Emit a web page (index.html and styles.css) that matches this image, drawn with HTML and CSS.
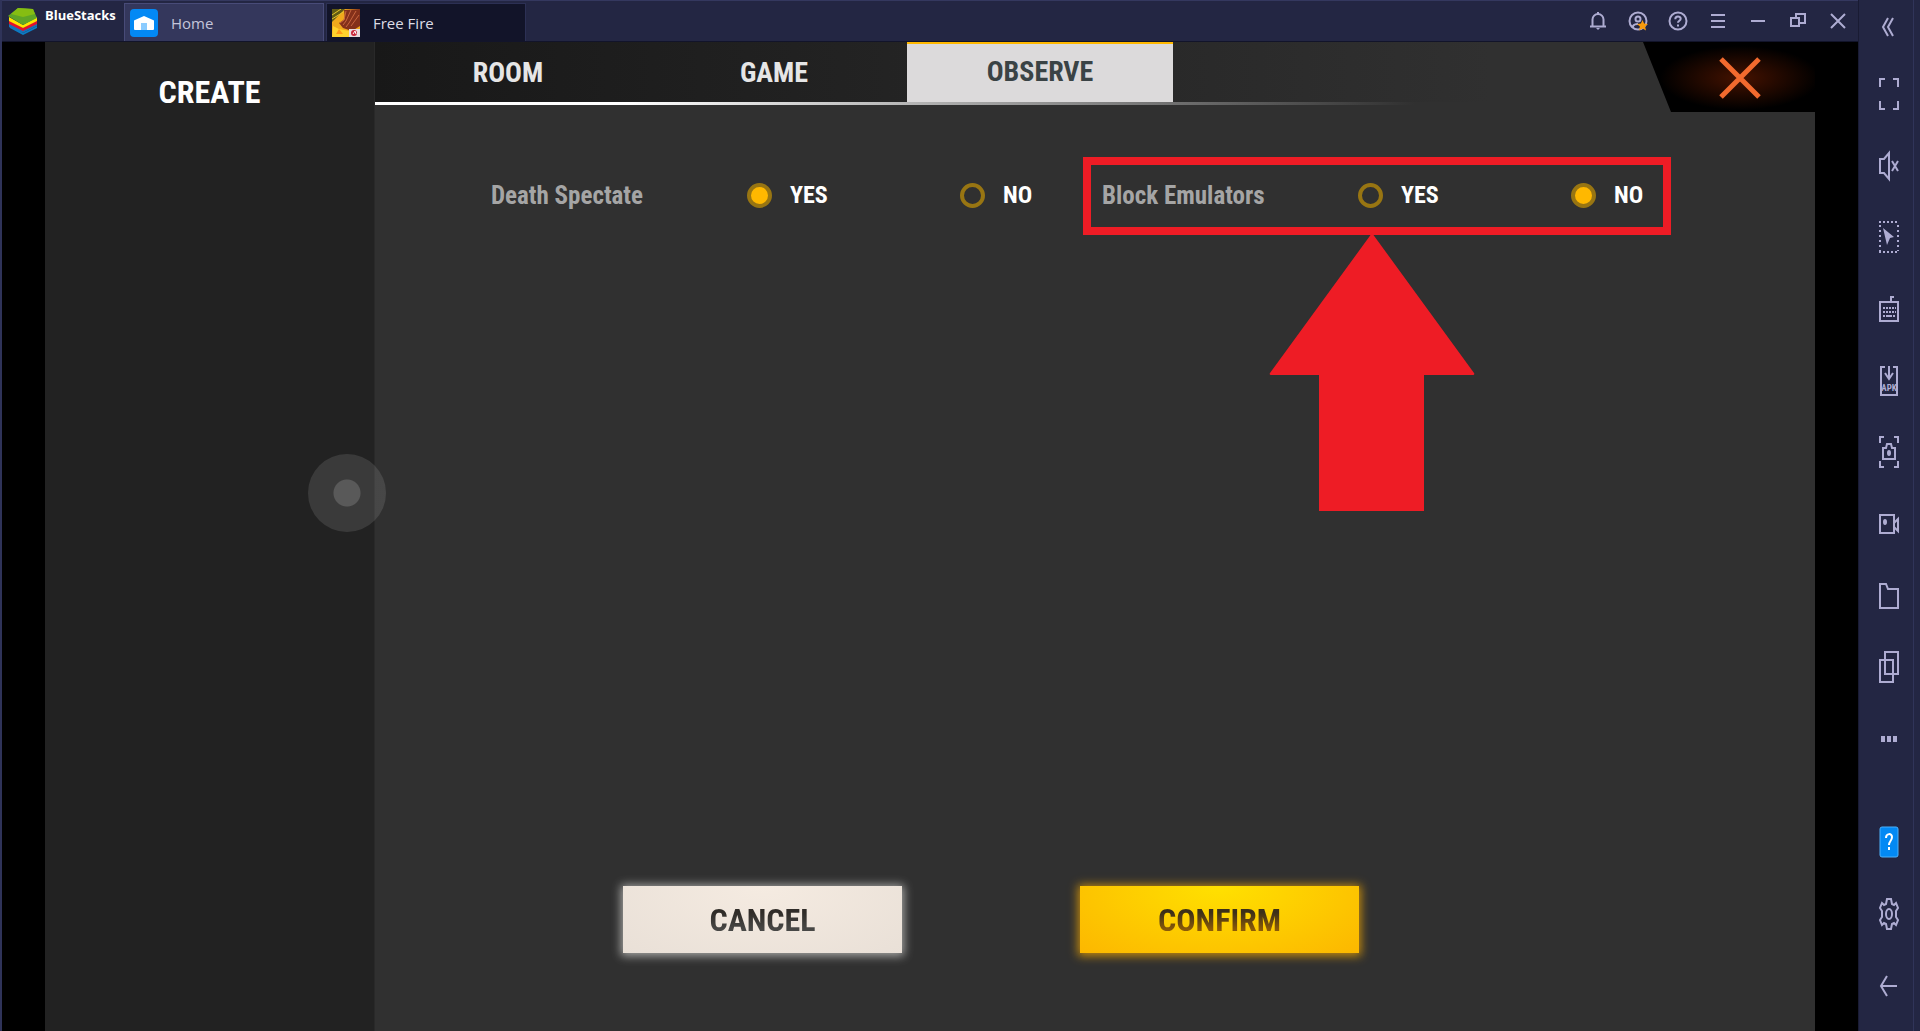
FILE: index.html
```
<!DOCTYPE html>
<html lang="en">
<head>
    <meta charset="UTF-8">
    <meta name="viewport" content="width=device-width, initial-scale=1.0">
    <title>BlueStacks</title>
    <link rel="stylesheet" href="styles.css">
</head>
<body>

<div class="window">
    <header class="titlebar">
        <svg class="logo" viewBox="0 0 30 28">
            <path d="M1 17l14 9 14-7v2l-14 7L2 21z" fill="#0b7cc4"/>
            <path d="M1 15l14 8 14-8v4l-14 7L1 20z" fill="#1673b8"/>
            <path d="M1 13l14 8 14-8v4l-14 7L1 17z" fill="#e2122c"/>
            <path d="M1 10l14 8 14-8v4l-14 7L1 14z" fill="#ffe500"/>
            <path d="M0 9L10 1l15 1 4 9-14 7z" fill="#5fa526"/>
            <path d="M3 7l7-6 15 1 2 5-12 3z" fill="#86bd12"/>
        </svg>
        <span class="brand">BlueStacks</span>
        <nav class="app-tabs">
            <a href="#" class="app-tab home">
                <svg class="app-icon" viewBox="0 0 28 28">
                    <rect width="28" height="28" rx="4" fill="#0389f4"/>
                    <path d="M4 12q0-1 1-1l9-4 9 4q1 0 1 1v8q0 1-1 1H5q-1 0-1-1z" fill="#fff"/>
                    <path d="M11 14h6v7h-6z" fill="#8bccff"/>
                </svg>
                Home
            </a>
            <a href="#" class="app-tab current">
                <svg class="app-icon" viewBox="0 0 28 28">
                    <path d="M0 0h28v28H0z" fill="#f0a91c"/>
                    <path d="M0 0h13L0 13z" fill="#605a14"/>
                    <path d="M0 6L9 0M0 10L13 2" stroke="#e6c62c" stroke-width="1"/>
                    <path d="M12 1l16-1v17l-8 5-9-3-4-5 6-4z" fill="#84301a"/>
                    <path d="M14 2l-2 9-4 3M19 1l-5 11-3 4M24 2l-7 12-3 4M27 6l-8 11" fill="none" stroke="#c8663f" stroke-width="1"/>
                    <path d="M1 17l6 3 10 2v6H0z" fill="#ffd22c"/>
                    <path d="M4 25l3-5 4 5" fill="#ff9a16"/>
                    <path d="M17 20h11v8H17z" fill="#e7dcdc"/>
                    <circle cx="22" cy="24" r="3" fill="#c8283a"/>
                    <path d="M21 25l2-3 1 3" fill="none" stroke="#fff"/>
                </svg>
                Free Fire
            </a>
        </nav>
        <div class="window-buttons">
            <button aria-label="Notifications"><svg viewBox="0 0 20 20"><path d="M2 15.500h16M4.500 15V8.500a5.500 5.500 0 0 1 11 0V15M10 3V1"/><path d="M8 17h4l-2 2z" fill="#aeacd2" stroke="none"/></svg></button>
            <button aria-label="Account"><svg viewBox="0 0 20 20"><circle cx="10" cy="10" r="8.500"/><circle cx="10" cy="8" r="2.500"/><path d="M5 16v-1q1-2 5-2"/><path d="M14.500 9l1.600 3.600 4 .4-3 2.600.9 4-3.500-2-3.500 2 .9-4-3-2.600 4-.4z" fill="#f79a0b" stroke="none"/></svg></button>
            <button aria-label="Help"><svg viewBox="0 0 20 20"><circle cx="10" cy="10" r="8.500"/><path d="M7.300 8.200c0-3.600 5.400-3.400 5.400-.4 0 2-2.700 2-2.700 4M10 13.500v2"/></svg></button>
            <button aria-label="Menu"><svg viewBox="0 0 20 20"><path d="M3 4h14M3 10h14M3 16h14"/></svg></button>
            <button aria-label="Minimize"><svg viewBox="0 0 20 20"><path d="M3 10h14"/></svg></button>
            <button aria-label="Restore"><svg viewBox="0 0 20 20"><path d="M3 7h8v8H3zM8 7V3h9v9h-6"/></svg></button>
            <button aria-label="Close"><svg viewBox="0 0 20 20"><path d="M3 3l14 14M17 3L3 17"/></svg></button>
        </div>
    </header>

    <main class="game">
        <aside class="sidebar">
            <h1>CREATE</h1>
        </aside>
        <section class="panel">
            <div class="panel-header">
                <nav class="tabs">
                    <button>ROOM</button>
                    <button>GAME</button>
                    <button class="active">OBSERVE</button>
                </nav>
                <button class="close-panel" aria-label="Close panel">
                    <svg viewBox="0 0 44 44"><path d="M3 3l38 38M41 3L3 41"/></svg>
                </button>
            </div>

            <form class="settings">
                <div class="setting" role="radiogroup" aria-labelledby="spectateLabel">
                    <span class="setting-name" id="spectateLabel">Death Spectate</span>
                    <label><input type="radio" name="spectate" value="yes" checked> YES</label>
                    <label><input type="radio" name="spectate" value="no"> NO</label>
                </div>
                <div class="setting highlighted" role="radiogroup" aria-labelledby="emulatorLabel">
                    <span class="setting-name" id="emulatorLabel">Block Emulators</span>
                    <label><input type="radio" name="emulators" value="yes"> YES</label>
                    <label><input type="radio" name="emulators" value="no" checked> NO</label>
                    <svg class="arrow" viewBox="0 0 206 278"><path d="M103 0l102 140q1 2-1 2h-49v136H50V142H2q-2 0-1-2z" fill="#ee1c25"/></svg>
                </div>
            </form>

            <div class="actions">
                <button class="cancel"><span>CANCEL</span></button>
                <button class="confirm"><span>CONFIRM</span></button>
            </div>
        </section>
        <div class="touch-pad"></div>
    </main>
</div>

<aside class="rail">
    <button class="collapse" aria-label="Collapse"><svg viewBox="0 0 20 32"><path d="M9 7L4 16l5 9M14 7L9 16l5 9"/></svg></button>
    <div class="rail-tools">
        <button aria-label="Full screen"><svg viewBox="0 0 20 32"><path d="M1 9V1h5M14 1h5v8M1 23v8h5M14 31h5v-8"/></svg></button>
        <button aria-label="Mute"><svg viewBox="0 0 20 32"><path d="M1 9h4l5-6v26l-5-6H1zM13 11l6 10M19 11l-6 10"/></svg></button>
        <button aria-label="Lock cursor"><svg viewBox="0 0 20 32"><path d="M0 1h20M0 31h20" stroke-dasharray="2 2"/><path d="M1 4v26M19 4v26" stroke-dasharray="2 3"/><path d="M4 7l11 9-4 1-3 7z" fill="#aeacd2" stroke="none"/></svg></button>
        <button aria-label="Game controls"><svg viewBox="0 0 20 32"><path d="M1 9h18v19H1zM12 9V4h3"/><path d="M4 15h13M4 19h13" stroke-dasharray="2 1"/><path d="M4 23h2M7 23h6M14 23h2"/></svg></button>
        <button aria-label="Install APK"><svg viewBox="0 0 20 32"><path d="M6 2H2v28h16V2h-4M10 1v12M6 8l4 6 4-6"/><text x="10" y="26">APK</text></svg></button>
        <button aria-label="Screenshot"><svg viewBox="0 0 20 32"><path d="M1 7V1h4M15 1h4v6M1 25v6h4M15 31h4v-6M4 12h3l1-4h4l1 4h3v11H4z"/><ellipse cx="10" cy="17" rx="1" ry="2" fill="#aeacd2"/></svg></button>
        <button aria-label="Record"><svg viewBox="0 0 20 32"><path d="M1 7h14v18H1zM15 15l4-4v12l-4-4"/><ellipse cx="6" cy="14" rx="1" ry="2" fill="#aeacd2"/></svg></button>
        <button aria-label="Media folder"><svg viewBox="0 0 20 32"><path d="M1 4h6l2 5h10v19H1z"/></svg></button>
        <button aria-label="Instances"><svg viewBox="0 0 20 32"><path d="M6 1h13v22H6zM1 9h13v22H1z"/></svg></button>
        <button aria-label="More"><svg viewBox="0 0 20 32"><path d="M2 13h4v6H2zM8 13h4v6H8zM14 13h4v6h-4z" fill="#aeacd2" stroke="none"/></svg></button>
    </div>
    <div class="rail-bottom">
        <button aria-label="Help center"><svg viewBox="0 0 20 32"><rect x="1" y="1" width="18" height="30" rx="2" fill="#0389f4" stroke="#4db0fb" stroke-width="1"/><path d="M7 12c0-5 6-5 6-1 0 4-3 4-3 8M10 21v3" stroke="#fff"/></svg></button>
        <button aria-label="Settings"><svg viewBox="0 0 20 32"><path d="M8 1h4l1 5 2 1 2-2 2 5-2 3v6l2 3-2 5-2-2-2 1-1 5H8l-1-5-2-1-2 2-2-5 2-3v-6l-2-3 2-5 2 2 2-1z"/><ellipse cx="10" cy="16" rx="3" ry="5"/></svg></button>
        <button aria-label="Back"><svg viewBox="0 0 20 32"><path d="M18 16H2M8 6L2 16l6 10"/></svg></button>
    </div>
</aside>

</body>
</html>
```
FILE: styles.css
```
*,
*::before {
    box-sizing: border-box;
}
body {
    margin: 0;
    display: flex;
    min-height: 100vh;
    background-color: #000;
    font-family: "Open Sans", "Noto Sans", sans-serif;
}
button {
    padding: 0;
    border: none;
    background: none;
    cursor: pointer;
}
.window {
    flex: 1;
    display: flex;
    flex-direction: column;
    border-left: 2px solid #2f3359;
}

/* Title bar */
.titlebar {
    display: flex;
    height: 42px;
    background-color: #232643;
    border-top: 1px solid #34385f;
    border-bottom: 1px solid #12142a;
}
.logo {
    width: 30px;
    height: 28px;
    margin: 6px 7px 0 6px;
}
.brand {
    width: 79px;
    margin-top: 4px;
    color: #fff;
    font-size: 13px;
    line-height: 20px;
    font-weight: bold;
}
.app-tabs {
    display: flex;
    gap: 2px;
    padding-top: 2px;
}
.app-tab {
    display: flex;
    align-items: center;
    gap: 13px;
    width: 200px;
    padding-left: 5px;
    border: 1px solid #484b78;
    border-bottom: none;
    background-color: #34375c;
    color: #c4c5da;
    font-size: 15px;
    text-decoration: none;
}
.app-tab.current {
    border-color: #2c3054;
    background-color: #121429;
    color: #dcdce6;
}
.app-icon {
    width: 28px;
    height: 28px;
}
.window-buttons {
    display: flex;
    margin-left: auto;
}
.window-buttons button {
    display: grid;
    place-items: center;
    width: 40px;
}
.window-buttons svg {
    width: 20px;
    height: 20px;
}
.window-buttons svg,
.rail svg {
    fill: none;
    stroke: #aeacd2;
    stroke-width: 2;
}

/* Game screen */
.game {
    position: relative;
    flex: 1;
    display: flex;
    padding: 0 43px;
    font-family: "Roboto Condensed", "Liberation Sans Narrow", "Liberation Sans", sans-serif;
    font-weight: bold;
}
.sidebar {
    width: 330px;
    background-color: #222;
    border-right: 1px solid #292929;
}
.sidebar h1 {
    margin: 30px 0 0;
    color: #fff;
    font-size: 32px;
    line-height: 40px;
    text-align: center;
}
.panel {
    flex: 1;
    display: flex;
    flex-direction: column;
    background-color: #303030;
}
.panel-header {
    display: flex;
    justify-content: space-between;
    height: 70px;
}
.tabs {
    flex: 1;
    display: flex;
    height: 63px;
    padding-bottom: 3px;
    background: linear-gradient(90deg, #fff 20%, #303030 82%) bottom / 100% 3px no-repeat,
        linear-gradient(90deg, #181818, #303030 88%);
}
.tabs button {
    width: 266px;
    color: #e6e6e6;
    font: inherit;
    font-size: 28px;
}
.tabs .active {
    padding-bottom: 4px;
    border-top: 2px solid #ffb800;
    background-color: #dcdadb;
    color: #3a4345;
}
.close-panel {
    display: grid;
    place-items: center;
    width: 172px;
    padding: 2px 0 0 22px;
    background: radial-gradient(ellipse 80px 32px at 97px 36px, #451200, #000);
    clip-path: polygon(0 0, 100% 0, 100% 100%, 28px 100%);
}
.close-panel svg {
    width: 44px;
    height: 44px;
    stroke: #f26a2e;
    stroke-width: 5;
}
.settings {
    display: flex;
    padding: 59px 0 0 116px;
}
.setting {
    position: relative;
    display: flex;
    align-items: center;
    width: 611px;
    height: 48px;
}
.setting-name {
    width: 256px;
    color: #a5a5a5;
    font-size: 25px;
}
.setting label {
    display: flex;
    align-items: center;
    gap: 18px;
    width: 213px;
    color: #fff;
    font-size: 24px;
}
.setting label:last-of-type {
    width: auto;
}
.setting input {
    appearance: none;
    width: 25px;
    height: 25px;
    margin: 0;
    border: 4px solid #987512;
    border-radius: 50%;
}
.setting input:checked {
    background-color: #ffb800;
}

/* Red box and arrow over the emulator setting */
.highlighted::before {
    content: "";
    position: absolute;
    top: -14px;
    left: -19px;
    width: 588px;
    height: 78px;
    border: 8px solid #ee1c25;
}
.arrow {
    position: absolute;
    top: 62px;
    left: 167px;
    width: 206px;
    height: 278px;
}

.actions {
    display: flex;
    gap: 178px;
    margin-top: auto;
    padding: 0 0 78px 248px;
}
.actions button {
    width: 279px;
    height: 67px;
    font: inherit;
    font-size: 32px;
}
.actions span {
    background: linear-gradient(#302c28 30%, #484846 75%);
    background-clip: text;
    color: transparent;
}
.actions .cancel {
    background: radial-gradient(ellipse at top, #f5ebe1, #e9e0d7);
    box-shadow: 0 1px 9px 2px #a8a8a6;
}
.actions .confirm {
    background: radial-gradient(ellipse at top, #ffe100, #fcb700);
    box-shadow: 0 1px 9px 2px #c48b0d;
}
.actions .confirm span {
    background-image: linear-gradient(#3c3019 30%, #8a5a08 75%);
}
.touch-pad {
    position: absolute;
    top: 412px;
    left: 306px;
    width: 78px;
    height: 78px;
    border-radius: 50%;
    background: radial-gradient(circle, rgba(255, 255, 255, 0.25) 13px, rgba(255, 255, 255, 0.11) 14px);
}

/* Tool rail */
.rail {
    display: flex;
    flex-direction: column;
    width: 62px;
    padding-bottom: 9px;
    border-left: 1px solid #191b33;
    background: linear-gradient(90deg, transparent 54px, #303459 54px, #303459 55px, transparent 55px) #232643;
}
.rail button {
    display: grid;
    place-items: center;
    width: 60px;
    height: 72px;
}
.rail svg {
    width: 20px;
    height: 32px;
}
.rail .collapse {
    height: 58px;
    padding-bottom: 4px;
}
.rail-tools {
    flex: 1;
    display: flex;
    flex-direction: column;
    margin-bottom: 31px;
}
.rail-tools button {
    flex: 1;
}
.rail text {
    fill: #aeacd2;
    stroke: none;
    font: bold 9px "Roboto Condensed", "Liberation Sans Narrow", sans-serif;
    text-anchor: middle;
}
```
